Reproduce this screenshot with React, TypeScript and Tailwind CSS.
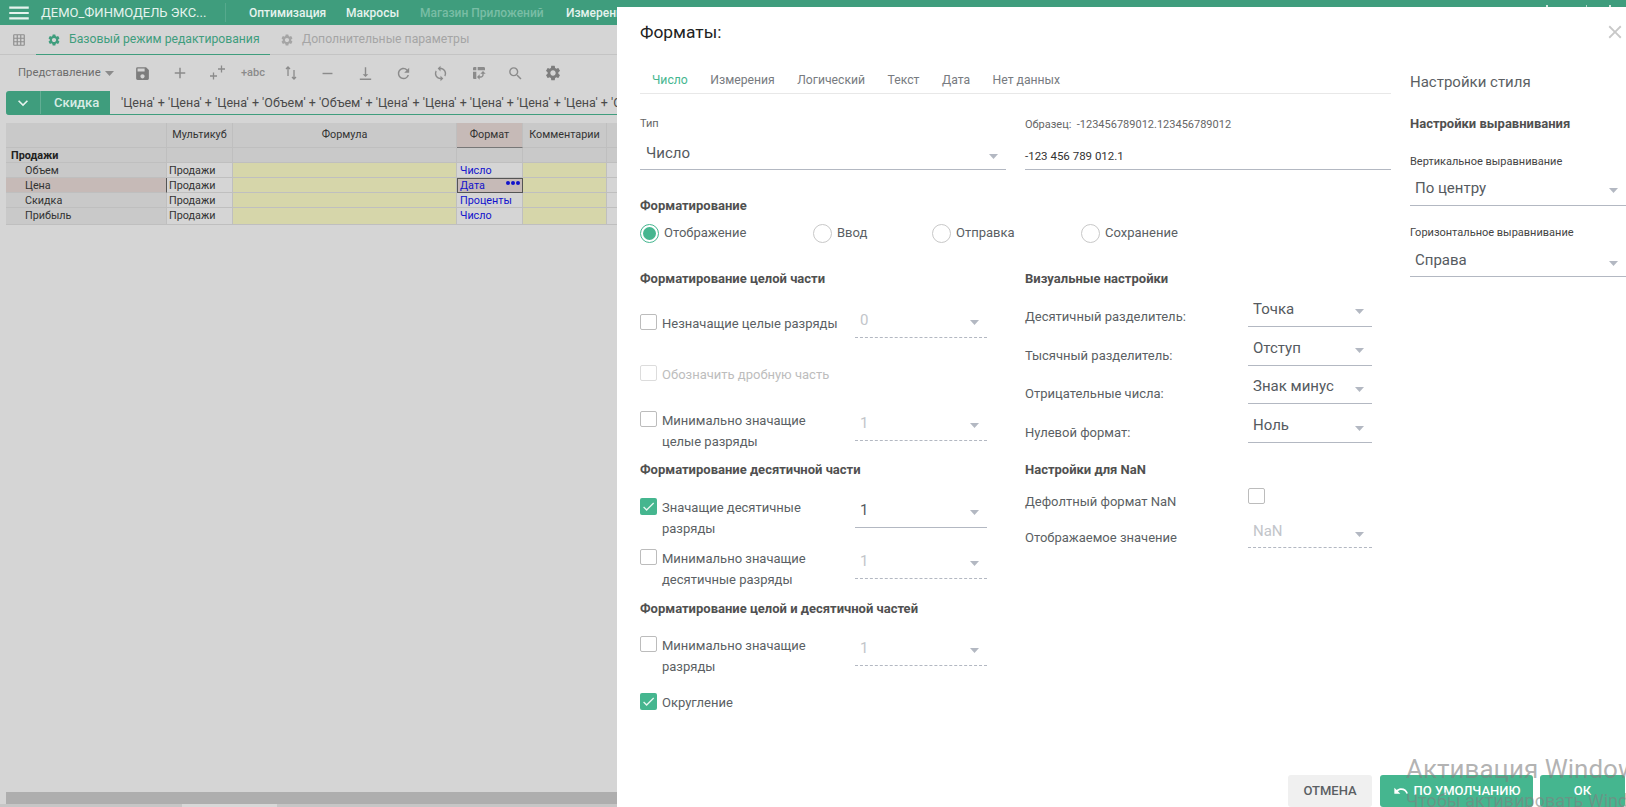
import { ReactNode } from 'react';
import {
  MdAdd,
  MdCheck,
  MdClose,
  MdGridOn,
  MdKeyboardArrowDown,
  MdMenu,
  MdPivotTableChart,
  MdRefresh,
  MdRemove,
  MdSave,
  MdSearch,
  MdSettings,
  MdSync,
  MdUndo,
  MdVerticalAlignBottom,
} from 'react-icons/md';

const navItems = [
  { label: 'Оптимизация', className: 'w-[97px] text-[#e6f3ee]' },
  { label: 'Макросы', className: 'w-[74px] text-[#e6f3ee]' },
  { label: 'Магазин Приложений', className: 'w-[146px] text-[#79bda5]' },
  { label: 'Измерения', className: 'w-[80px] text-[#e6f3ee]' },
];

const tabs = ['Число', 'Измерения', 'Логический', 'Текст', 'Дата', 'Нет данных'];

const rows = [
  { name: 'Объем', format: 'Число' },
  { name: 'Цена', format: 'Дата', selected: true },
  { name: 'Скидка', format: 'Проценты' },
  { name: 'Прибыль', format: 'Число' },
];

function Caret({ className = 'text-[#b3b8c2]' }: { className?: string }) {
  return (
    <svg width="9" height="5" viewBox="0 0 9 5" className={className}>
      <polygon points="0,0 9,0 4.5,5" fill="currentColor" />
    </svg>
  );
}

function Select({
  value,
  disabled = false,
  className = '',
}: {
  value: string;
  disabled?: boolean;
  className?: string;
}) {
  return (
    <div
      className={`flex h-[35px] items-center justify-between border-b pl-[5px] pr-2 text-[15px] ${
        disabled
          ? 'border-dashed border-[#b3b8c2] text-[#c2c5ca]'
          : 'border-[#b3b8c2] text-[#555a60]'
      } ${className}`}
    >
      <span>{value}</span>
      <Caret className="mt-[5px] text-[#b3b8c2]" />
    </div>
  );
}

function Checkbox({ checked = false, disabled = false }: { checked?: boolean; disabled?: boolean }) {
  if (checked) {
    return (
      <span className="flex h-[17px] w-[17px] shrink-0 items-center justify-center rounded-[2px] bg-[#45b68f]">
        <MdCheck className="text-[#e8f7f1]" size={15} />
      </span>
    );
  }
  return (
    <span
      className={`block h-[16px] w-[17px] shrink-0 rounded-[2px] border ${
        disabled ? 'border-[#dcdcdc]' : 'border-[#bcbcbc]'
      }`}
    />
  );
}

function Radio({ label, active = false, className }: { label: string; active?: boolean; className: string }) {
  return (
    <div className={`flex items-center gap-[5px] ${className}`}>
      <span
        className={`flex h-[19px] w-[19px] items-center justify-center rounded-full border ${
          active ? 'border-[#45b68f]' : 'border-[#c8c8c8]'
        }`}
      >
        {active && <span className="h-[13px] w-[13px] rounded-full bg-[#45b68f]" />}
      </span>
      <span className="text-[13px] text-[#5b5f64]">{label}</span>
    </div>
  );
}

function Heading({ children, className = '' }: { children: ReactNode; className?: string }) {
  return <div className={`h-[16px] text-[13px] font-bold leading-[16px] text-[#505050] ${className}`}>{children}</div>;
}

function OptionRow({
  label,
  checked,
  disabled,
  select,
  selectDisabled = true,
  selectTop = 6,
  className = '',
}: {
  label: ReactNode;
  checked?: boolean;
  disabled?: boolean;
  select?: string;
  selectDisabled?: boolean;
  selectTop?: number;
  className?: string;
}) {
  return (
    <div className={`flex items-start ${className}`}>
      <div className="flex w-[215px] gap-[5px] pt-[11px]">
        <Checkbox checked={checked} disabled={disabled} />
        <div className={`-mt-[1px] text-[13px] leading-[21px] ${disabled ? 'text-[#bdbdbd]' : 'text-[#5b5f64]'}`}>
          {label}
        </div>
      </div>
      {select && (
        <Select
          value={select}
          disabled={selectDisabled}
          className={`w-[132px] ${selectTop === 0 ? '' : 'mt-[6px]'}`}
        />
      )}
    </div>
  );
}

function VisualRow({
  label,
  value,
  disabled,
  className = '',
  selectClassName = '',
}: {
  label: string;
  value: string;
  disabled?: boolean;
  className?: string;
  selectClassName?: string;
}) {
  return (
    <div className={`flex ${className}`}>
      <div className="w-[223px] pt-[15px] text-[13px] leading-[20px] text-[#5b5f64]">{label}</div>
      <Select value={value} disabled={disabled} className={`w-[124px] ${selectClassName}`} />
    </div>
  );
}

function TwoPlus() {
  return (
    <svg width="18" height="18" viewBox="0 0 18 18" stroke="currentColor" strokeWidth="1.3" fill="none">
      <path d="M10 5h7M13.500 1.500v7M2 12h7M5.500 8.500v7" />
    </svg>
  );
}

function SortArrows() {
  return (
    <svg width="12" height="14" viewBox="0 0 12 14" stroke="currentColor" strokeWidth="1.3" fill="none">
      <path d="M3 10V1M1 3l2-2 2 2M9 4v9M7 11l2 2 2-2" />
    </svg>
  );
}

function PageBehind() {
  const cell = 'border-r border-b border-[#bfbfbf]';
  return (
    <div className="flex h-full flex-col">
      <header className="flex h-[25px] shrink-0 items-center bg-[#3f9d7d]">
        <MdMenu className="ml-[6px] text-[#e6f3ee]" size={26} />
        <span className="ml-[9px] w-[184px] text-[13px] text-[#e6f3ee]">ДЕМО_ФИНМОДЕЛЬ ЭКС...</span>
        <span className="h-[19px] w-px bg-[#56a98d]" />
        <nav className="ml-[23px] flex text-[12px] font-medium">
          {navItems.map((item) => (
            <span key={item.label} className={item.className}>
              {item.label}
            </span>
          ))}
        </nav>
        <div className="relative ml-auto self-start pt-[5px]">
          <div className="flex h-[2px] w-[80px] pr-[15px]">
            <span className="w-[4px] bg-[#d7e8e1]" />
            <span className="ml-[38px] w-[2px] bg-[#b5d6ca]" />
            <span className="ml-[22px] w-[3px] bg-[#d7e8e1]" />
          </div>
        </div>
      </header>

      <div className="flex h-[30px] shrink-0 items-stretch border-b border-[#c4c4c4]">
        <div className="flex w-[36px] items-center justify-center pl-[1px]">
          <MdGridOn className="text-[#8e8e8e]" size={14} />
        </div>
        <div className="-mb-px flex w-[234px] items-center gap-[8px] whitespace-nowrap border-b border-[#3f9d7d] pl-[11px] text-[12.2px] text-[#3f9d7d]">
          <MdSettings size={14} />
          Базовый режим редактирования
        </div>
        <div className="ml-[10px] flex items-center gap-[8px] whitespace-nowrap text-[12.2px] text-[#a5a5a5]">
          <MdSettings size={14} />
          Дополнительные параметры
        </div>
      </div>

      <div className="flex h-[36px] shrink-0 items-center text-[#8b8b8b]">
        <span className="ml-[18px] w-[87px] text-[11.3px] text-[#6d6d6d]">Представление</span>
        <Caret className="text-[#8b8b8b]" />
        <MdSave className="ml-[20px] text-[#7d7d7d]" size={17} />
        <MdAdd className="ml-[20px]" size={18} />
        <span className="ml-[19px]">
          <TwoPlus />
        </span>
        <span className="ml-[15px] w-[28px] text-[11px] font-medium">+abc</span>
        <span className="ml-[16px]">
          <SortArrows />
        </span>
        <MdRemove className="ml-[22px]" size={17} />
        <MdVerticalAlignBottom className="ml-[21px]" size={17} />
        <MdRefresh className="ml-[21px]" size={17} />
        <MdSync className="ml-[20px]" size={17} />
        <MdPivotTableChart className="ml-[22px]" size={16} />
        <MdSearch className="ml-[20px]" size={17} />
        <MdSettings className="ml-[20px] text-[#7d7d7d]" size={18} />
      </div>

      <div className="ml-[6px] flex h-[24px] shrink-0 overflow-hidden rounded-l-[3px] border-b border-[#3f9d7d] bg-[#3f9d7d]">
        <div className="flex w-[35px] items-center justify-center border-r border-[#62ae94] text-[#e6f3ee]">
          <MdKeyboardArrowDown size={20} />
        </div>
        <div className="w-[69px] pl-[13px] text-[13px] font-medium leading-[23px] text-[#d8ece5]">Скидка</div>
        <div className="flex-1 whitespace-nowrap bg-[#d5d5d5] pl-[11px] text-[12.5px] leading-[23px] text-[#4a4a4a]">
          'Цена' + 'Цена' + 'Цена' + 'Объем' + 'Объем' + 'Цена' + 'Цена' + 'Цена' + 'Цена' + 'Цена' + 'Объем' + 'Объем'
        </div>
      </div>

      <div className="ml-[6px] mt-[8px] grid shrink-0 grid-cols-[161px_66px_224px_66px_84px_1fr] grid-rows-[25px_15px_15px_15px_15px] text-[10.8px] leading-[16px] text-[#333]">
        <div className={`${cell} bg-[#c9c9c9]`} />
        <div className={`${cell} flex items-center justify-center bg-[#c9c9c9]`}>Мультикуб</div>
        <div className={`${cell} flex items-center justify-center bg-[#c9c9c9]`}>Формула</div>
        <div className="flex items-center justify-center border-r border-b border-r-[#bfbfbf] border-b-[#777] bg-[#c6bab7]">
          Формат
        </div>
        <div className={`${cell} flex items-center justify-center bg-[#c9c9c9]`}>Комментарии</div>
        <div className={`${cell} bg-[#c9c9c9]`} />

        <div className={`${cell} bg-[#c9c9c9] pl-[5px] font-bold text-[#222]`}>Продажи</div>
        <div className={`${cell} bg-[#c9c9c9]`} />
        <div className={`${cell} bg-[#c9c9c9]`} />
        <div className={`${cell} bg-[#c9c9c9]`} />
        <div className={`${cell} bg-[#c9c9c9]`} />
        <div className={`${cell} bg-[#c9c9c9]`} />

        {rows.map((row) => (
          <div key={row.name} className="contents">
            <div
              className={`border-b border-[#bfbfbf] pl-[19px] ${
                row.selected ? 'border-r border-r-[#555] bg-[#c6bab7]' : 'border-r bg-[#c9c9c9]'
              }`}
            >
              {row.name}
            </div>
            <div className={`${cell} bg-[#d5d5d5] pl-[2px]`}>Продажи</div>
            <div className={`${cell} bg-[#d6d6aa]`} />
            {row.selected ? (
              <div className="relative border border-[#555] bg-[#c6bab7] pl-[2px] leading-[14px] text-[#1212cc]">
                {row.format}
                <span className="absolute right-[2px] top-[2px] flex gap-[1px]">
                  <span className="h-[4px] w-[4px] rounded-full bg-[#1212cc]" />
                  <span className="h-[4px] w-[4px] rounded-full bg-[#1212cc]" />
                  <span className="h-[4px] w-[4px] rounded-full bg-[#1212cc]" />
                </span>
              </div>
            ) : (
              <div className={`${cell} bg-[#d5d5d5] pl-[3px] text-[#1212cc]`}>{row.format}</div>
            )}
            <div className={`${cell} bg-[#d6d6aa]`} />
            <div className={`${cell} bg-[#d5d5d5]`} />
          </div>
        ))}
      </div>

      <div className="mt-auto ml-[6px] h-[12px] shrink-0 bg-[#aeaeae]" />
      <div className="flex h-[3px] shrink-0 bg-[#c6c6c6]">
        <span className="ml-[182px] w-[95px] bg-[#d8d8d8]" />
      </div>
    </div>
  );
}

function FormatsModal() {
  return (
    <div className="absolute bottom-0 left-[617px] right-0 top-[7px] flex flex-col bg-white pl-[23px]">
      <div className="flex h-[50px] shrink-0 items-center pt-[1px] text-[17.4px] text-[#222]">Форматы:</div>
      <MdClose className="absolute right-0 top-[14px] text-[#c8c8c8]" size={22} />

      <div className="flex min-h-0 flex-1">
        <div className="w-[751px] shrink-0">
          <div className="mt-[11px] flex h-[26px] gap-[22.5px] border-b border-[#e8e8e8] pl-[12px] text-[12.2px] leading-[25px] text-[#777b80]">
            {tabs.map((tab, i) => (
              <span key={tab} className={i === 0 ? 'text-[#45b68f]' : ''}>
                {tab}
              </span>
            ))}
          </div>

          <div className="mt-[23px] grid grid-cols-2 gap-x-[19px]">
            <div>
              <div className="h-[14px] text-[11px] leading-[14px] text-[#666]">Тип</div>
              <div className="flex h-[39px] items-center justify-between border-b border-[#b3b8c2] pl-[6px] pr-2 pt-[7px] text-[15px] text-[#555a60]">
                <span>Число</span>
                <Caret className="mt-[5px] text-[#b3b8c2]" />
              </div>
            </div>
            <div>
              <div className="h-[14px] text-[11px] leading-[15px] text-[#666]">Образец:&nbsp; -123456789012.123456789012</div>
              <div className="flex h-[39px] items-end border-b border-[#b3b8c2] pb-[5px] text-[11.5px] leading-[16px] text-[#333]">
                -123 456 789 012.1
              </div>
            </div>
          </div>

          <Heading className="mt-[28px]">Форматирование</Heading>
          <div className="mt-[9px] flex h-[20px]">
            <Radio label="Отображение" active className="w-[173px]" />
            <Radio label="Ввод" className="w-[119px]" />
            <Radio label="Отправка" className="w-[149px]" />
            <Radio label="Сохранение" className="w-[130px]" />
          </div>

          <div className="mt-[28px] grid grid-cols-[347px_347px] gap-x-[38px]">
            <div>
              <Heading>Форматирование целой части</Heading>
              <OptionRow className="mt-[16px] h-[35px]" label="Незначащие целые разряды" select="0" selectTop={0} />
              <OptionRow className="mt-[16px] h-[35px]" label="Обозначить дробную часть" disabled />
              <OptionRow
                className="mt-[11px] h-[51px]"
                label={
                  <>
                    Минимально значащие
                    <br />
                    целые разряды
                  </>
                }
                select="1"
              />
              <Heading className="mt-[11px]">Форматирование десятичной части</Heading>
              <OptionRow
                className="mt-[9px] h-[51px]"
                checked
                label={
                  <>
                    Значащие десятичные
                    <br />
                    разряды
                  </>
                }
                select="1"
                selectDisabled={false}
              />
              <OptionRow
                className="h-[51px]"
                label={
                  <>
                    Минимально значащие
                    <br />
                    десятичные разряды
                  </>
                }
                select="1"
              />
              <Heading className="mt-[12px]">Форматирование целой и десятичной частей</Heading>
              <OptionRow
                className="mt-[8px] h-[51px]"
                label={
                  <>
                    Минимально значащие
                    <br />
                    разряды
                  </>
                }
                select="1"
              />
              <OptionRow className="mt-[6px]" checked label="Округление" />
            </div>

            <div>
              <Heading>Визуальные настройки</Heading>
              <VisualRow className="mt-[5px]" label="Десятичный разделитель:" value="Точка" />
              <VisualRow className="mt-[4px]" label="Тысячный разделитель:" value="Отступ" />
              <VisualRow className="mt-[3px]" label="Отрицательные числа:" value="Знак минус" selectClassName="pt-[1px]" />
              <VisualRow className="mt-[4px]" label="Нулевой формат:" value="Ноль" selectClassName="pt-[1px]" />
              <Heading className="mt-[19px]">Настройки для NaN</Heading>
              <div className="mt-[10px] flex h-[24px]">
                <div className="w-[223px] pt-[4px] text-[13px] leading-[20px] text-[#5b5f64]">Дефолтный формат NaN</div>
                <Checkbox />
              </div>
              <VisualRow
                className="mt-[1px]"
                label="Отображаемое значение"
                value="NaN"
                disabled
                selectClassName="pt-[3px]"
              />
            </div>
          </div>
        </div>

        <aside className="ml-[19px] flex-1 pt-[15px]">
          <div className="h-[20px] text-[15px] leading-[20px] text-[#5b5f64]">Настройки стиля</div>
          <Heading className="mt-[24px]">Настройки выравнивания</Heading>
          <div className="mt-[23px] h-[14px] text-[11px] leading-[14px] text-[#444]">Вертикальное выравнивание</div>
          <Select className="mt-[2px]" value="По центру" />
          <div className="mt-[20px] h-[14px] text-[11px] leading-[14px] text-[#444]">Горизонтальное выравнивание</div>
          <Select className="mt-[2px] pt-[3px]" value="Справа" />
        </aside>
      </div>

      <footer className="flex h-[32px] shrink-0 justify-end gap-[7px] pr-[1px] text-[13px] font-medium">
        <button className="mr-px flex w-[84px] items-center justify-center rounded-[3px] bg-[#f0f0f0] text-[#5b5f64]">
          ОТМЕНА
        </button>
        <button className="flex w-[153px] items-center justify-center gap-[5px] rounded-[3px] bg-[#45b68f] text-white">
          <MdUndo size={16} />
          ПО УМОЛЧАНИЮ
        </button>
        <button className="w-[85px] rounded-[3px] bg-[#45b68f] text-white">ОК</button>
      </footer>
    </div>
  );
}

export default function App() {
  return (
    <div className="relative h-[807px] w-[1626px] overflow-hidden bg-[#d5d5d5] font-[family-name:Roboto,sans-serif]">
      <PageBehind />
      <FormatsModal />
      <div className="pointer-events-none absolute left-[1406px] top-[754px] whitespace-nowrap text-[26px] leading-[30px] text-[#808080]/60">
        Активация Windows
      </div>
      <div className="pointer-events-none absolute left-[1406px] top-[790px] whitespace-nowrap text-[18px] leading-[22px] text-[#808080]/60">
        Чтобы активировать Windows, перейдите
      </div>
    </div>
  );
}
